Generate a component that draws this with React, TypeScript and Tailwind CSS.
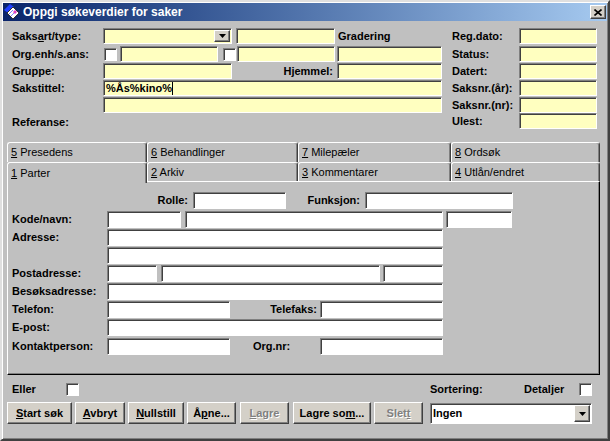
import React from "react";

const sunken =
  "border border-t-[#808080] border-l-[#808080] border-b-white border-r-white shadow-[inset_1px_1px_0_#404040]";
const raised =
  "border border-t-white border-l-white border-b-[#404040] border-r-[#404040] shadow-[inset_-1px_-1px_0_#808080] bg-[#d4d0c8]";

const Field = ({
  className = "",
  white = false,
  children,
}: {
  className?: string;
  white?: boolean;
  children?: React.ReactNode;
}) => (
  <div
    className={`${sunken} ${white ? "bg-white" : "bg-[#ffffc0]"} flex items-center px-[2px] text-[11px] font-bold text-black shrink-0 ${className}`}
  >
    {children}
  </div>
);

const Check = ({ className = "" }: { className?: string }) => (
  <div className={`${sunken} bg-white w-[13px] h-[13px] shrink-0 ${className}`} />
);

const DropBtn = ({ className = "" }: { className?: string }) => (
  <div className={`${raised} flex items-center justify-center ml-auto ${className}`}>
    <svg width="7" height="4" viewBox="0 0 7 4">
      <polygon points="0,0 7,0 3.5,4" fill="#000" />
    </svg>
  </div>
);

const Label = ({ className = "", children }: { className?: string; children: React.ReactNode }) => (
  <div className={`flex items-center h-[16px] text-[11px] font-bold text-black shrink-0 ${className}`}>{children}</div>
);

const Tab = ({
  n,
  label,
  className,
  selected = false,
}: {
  n: string;
  label: string;
  className: string;
  selected?: boolean;
}) => (
  <div
    className={`${className} relative flex items-center pl-[3px] bg-[#c0c0c0] text-[11px] text-black border-t border-l border-r border-t-white border-l-white border-r-[#404040] rounded-t-[3px] shadow-[inset_-1px_0_0_#808080] ${
      selected ? "z-10 h-[21px] -mb-[2px]" : "h-full"
    }`}
  >
    <span>
      <u>{n}</u> {label}
    </span>
  </div>
);

const Button = ({
  className,
  disabled = false,
  children,
}: {
  className: string;
  disabled?: boolean;
  children: React.ReactNode;
}) => (
  <div
    className={`${raised} ${className} h-[22px] shrink-0 flex items-center justify-center text-[11px] font-bold ${
      disabled ? "text-[#808080] [text-shadow:1px_1px_0_#ffffff]" : "text-black"
    }`}
  >
    <span>{children}</span>
  </div>
);

const TitleIcon = () => (
  <svg width="16" height="16" viewBox="0 0 16 16" className="shrink-0">
    <polygon points="0,6 6,0 10,3 4,9" fill="#2040ff" />
    <polygon points="3,9 9,3 15,9 9,15" fill="#ffffff" stroke="#303030" strokeWidth="1" />
    <line x1="5" y1="10" x2="9" y2="6" stroke="#8080ff" strokeWidth="1" />
    <line x1="7" y1="12" x2="11" y2="8" stroke="#8080ff" strokeWidth="1" />
    <polygon points="9,8 11,6 13,8 11,10" fill="#e040c0" />
  </svg>
);

export default function App() {
  return (
    <div className="w-[610px] h-[441px] bg-[#c0c0c0] border-2 border-t-[#dfdfdf] border-l-[#dfdfdf] border-b-[#404040] border-r-[#404040] shadow-[inset_1px_1px_0_#ffffff,inset_-1px_-1px_0_#808080] p-[1px] font-['Liberation_Sans',Arial,sans-serif] overflow-hidden">
      {/* title bar */}
      <div className="flex items-center h-[18px] bg-linear-to-r from-[#0a246a] to-[#a6caf0] pl-[1px] pr-[1px]">
        <TitleIcon />
        <span className="ml-[3px] text-white font-bold text-[12px] leading-none">Oppgi søkeverdier for saker</span>
        <div className={`${raised} ml-auto w-[16px] h-[14px] flex items-center justify-center`}>
          <svg width="8" height="7" viewBox="0 0 8 7">
            <path d="M0.5 0.5 L7.5 6.5 M7.5 0.5 L0.5 6.5" stroke="#000" strokeWidth="1.6" />
          </svg>
        </div>
      </div>

      {/* top search fields */}
      <div className="mt-[7px] pl-[9px] flex flex-col">
        <div className="flex h-[18px] items-start">
          <Label className="w-[91px]">
            Saks<u>a</u>rt/type:
          </Label>
          <div className="flex w-[339px]">
            <Field className="w-[129px] h-[16px] pr-[1px]">
              <DropBtn className="w-[16px] h-[12px]" />
            </Field>
            <Field className="w-[99px] h-[16px] ml-[4px]" />
            <Label className="ml-[3px]">Gradering</Label>
          </div>
          <div className="w-[10px]" />
          <Label className="w-[67px]">Reg.dato:</Label>
          <Field className="w-[78px] h-[16px]" />
        </div>

        <div className="flex h-[17px] items-start">
          <Label className="w-[91px]">Org.enh/s.ans:</Label>
          <div className="flex w-[339px] items-start">
            <Check className="ml-[1px] mt-[2px]" />
            <Field className="w-[98px] h-[16px] ml-[3px]" />
            <Check className="ml-[5px] mt-[2px]" />
            <Field className="w-[98px] h-[16px] ml-[1px]" />
            <Field className="w-[105px] h-[16px] ml-[2px]" />
          </div>
          <div className="w-[10px]" />
          <Label className="w-[67px]">Status:</Label>
          <Field className="w-[78px] h-[16px]" />
        </div>

        <div className="flex h-[17px] items-start">
          <Label className="w-[91px]">Gruppe:</Label>
          <div className="flex w-[339px]">
            <Field className="w-[129px] h-[16px]" />
            <Label className="flex-1 justify-end pr-[4px]">Hjemmel:</Label>
            <Field className="w-[105px] h-[16px]" />
          </div>
          <div className="w-[10px]" />
          <Label className="w-[67px]">Datert:</Label>
          <Field className="w-[78px] h-[16px]" />
        </div>

        <div className="flex h-[17px] items-start">
          <Label className="w-[91px]">Sakstittel:</Label>
          <Field className="w-[339px] h-[16px]">
            <span>%Ås%kino%</span>
            <span className="w-[1px] h-[13px] bg-black" />
          </Field>
          <div className="w-[10px]" />
          <Label className="w-[67px]">Saksnr.(år):</Label>
          <Field className="w-[78px] h-[16px]" />
        </div>

        <div className="flex h-[16px] items-start">
          <div className="w-[91px]" />
          <Field className="w-[339px] h-[16px]" />
          <div className="w-[10px]" />
          <Label className="w-[67px]">Saksnr.(nr):</Label>
          <Field className="w-[78px] h-[16px]" />
        </div>

        <div className="flex h-[17px] items-start">
          <Label className="w-[91px] mt-[1px]">Referanse:</Label>
          <div className="w-[339px]" />
          <div className="w-[10px]" />
          <Label className="w-[67px]">Ulest:</Label>
          <Field className="w-[78px] h-[16px]" />
        </div>
      </div>

      {/* tabs */}
      <div className="mt-[12px] ml-[4px] w-[593px] flex flex-col">
        <div className="flex h-[20px]">
          <Tab n="5" label="Presedens" className="w-[140px]" />
          <Tab n="6" label="Behandlinger" className="w-[151px]" />
          <Tab n="7" label="Milepæler" className="w-[153px]" />
          <Tab n="8" label="Ordsøk" className="w-[149px]" />
        </div>
        <div className="flex h-[19px] items-start">
          <Tab n="1" label="Parter" className="w-[140px]" selected />
          <Tab n="2" label="Arkiv" className="w-[151px]" />
          <Tab n="3" label="Kommentarer" className="w-[153px]" />
          <Tab n="4" label="Utlån/endret" className="w-[149px]" />
        </div>
        <div className="h-[194px] border border-t-white border-l-white border-b-black border-r-black shadow-[inset_-1px_-1px_0_#808080] pt-[10px] pl-[4px] flex flex-col gap-[1px]">
          <div className="flex h-[17px] items-start">
            <Label className="w-[181px] h-[17px] justify-end pr-[5px]">Rolle:</Label>
            <Field white className="w-[93px] h-[17px]" />
            <Label className="w-[79px] h-[17px] justify-end pr-[5px]">Funksjon:</Label>
            <Field white className="w-[148px] h-[17px]" />
          </div>
          <div className="flex h-[17px] items-start mt-[1px]">
            <Label className="w-[95px] h-[17px]">Kode/navn:</Label>
            <Field white className="w-[74px] h-[17px]" />
            <Field white className="w-[258px] h-[17px] ml-[4px]" />
            <Field white className="w-[66px] h-[17px] ml-[3px]" />
          </div>
          <div className="flex h-[17px] items-start">
            <Label className="w-[95px] h-[17px]">Adresse:</Label>
            <Field white className="w-[336px] h-[17px]" />
          </div>
          <div className="flex h-[17px] items-start">
            <div className="w-[95px]" />
            <Field white className="w-[336px] h-[17px]" />
          </div>
          <div className="flex h-[17px] items-start">
            <Label className="w-[95px] h-[17px]">Postadresse:</Label>
            <Field white className="w-[50px] h-[17px]" />
            <Field white className="w-[219px] h-[17px] ml-[4px]" />
            <Field white className="w-[60px] h-[17px] ml-[3px]" />
          </div>
          <div className="flex h-[17px] items-start">
            <Label className="w-[95px] h-[17px]">Besøksadresse:</Label>
            <Field white className="w-[336px] h-[17px]" />
          </div>
          <div className="flex h-[17px] items-start">
            <Label className="w-[95px] h-[17px]">Telefon:</Label>
            <Field white className="w-[123px] h-[17px]" />
            <Label className="w-[90px] h-[17px] justify-end pr-[3px]">Telefaks:</Label>
            <Field white className="w-[123px] h-[17px]" />
          </div>
          <div className="flex h-[17px] items-start">
            <Label className="w-[95px] h-[17px]">E-post:</Label>
            <Field white className="w-[336px] h-[17px]" />
          </div>
          <div className="flex h-[17px] items-start mt-[1px]">
            <Label className="w-[95px] h-[17px]">Kontaktperson:</Label>
            <Field white className="w-[123px] h-[17px]" />
            <Label className="w-[90px] h-[17px] pl-[23px]">Org.nr:</Label>
            <Field white className="w-[123px] h-[17px]" />
          </div>
        </div>
      </div>

      {/* bottom options */}
      <div className="flex items-center h-[13px] mt-[8px] pl-[9px] text-[11px] font-bold text-black">
        <span className="w-[54px]">Eller</span>
        <Check />
        <span className="ml-[351px] w-[94px]">Sortering:</span>
        <span className="w-[55px]">Detaljer</span>
        <Check />
      </div>

      <div className="flex items-start mt-[6px] pl-[4px]">
        <Button className="w-[65px]">
          <u>S</u>tart søk
        </Button>
        <Button className="w-[50px] ml-[3px]">
          <u>A</u>vbryt
        </Button>
        <Button className="w-[56px] ml-[3px]">
          <u>N</u>ullstill
        </Button>
        <Button className="w-[49px] ml-[3px]">
          Å<u>p</u>ne...
        </Button>
        <Button className="w-[49px] ml-[4px]" disabled>
          <u>L</u>agre
        </Button>
        <Button className="w-[78px] ml-[4px]">
          Lagre so<u>m</u>...
        </Button>
        <Button className="w-[49px] ml-[3px]" disabled>
          Slet<u>t</u>
        </Button>
        <Field white className="w-[162px] h-[21px] ml-[7px] mt-[1px] pr-[1px]">
          <span>Ingen</span>
          <DropBtn className="w-[16px] h-[17px]" />
        </Field>
      </div>
    </div>
  );
}
